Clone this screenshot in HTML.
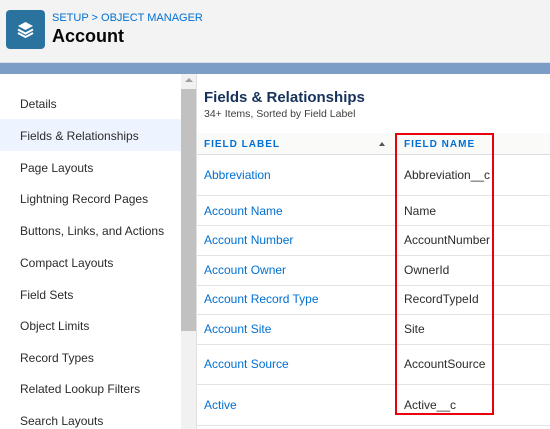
<!DOCTYPE html>
<html><head><style>
*{margin:0;padding:0;box-sizing:border-box}
body{width:550px;height:429px;overflow:hidden;font-family:"Liberation Sans",sans-serif;background:#fff;position:relative}
.hdr{position:absolute;left:0;top:0;width:550px;height:63px;background:#f3f3f3;border-bottom:1px solid #d8dde6}
.icon{position:absolute;left:6px;top:10px;width:39px;height:39px;background:#2a739e;border-radius:4px}
.crumb{position:absolute;left:52px;top:12px;font-size:11px;color:#0070d2}
.title{position:absolute;left:52px;top:26px;font-size:18px;color:#080707;font-weight:bold}
.band{position:absolute;left:0;top:63px;width:550px;height:11px;background:#7b9dc6}
.side{position:absolute;left:0;top:74px;width:181px;height:355px;background:#fff}
.side div{position:absolute;left:20px;font-size:12px;color:#2b2b2b}
.sel{position:absolute;left:0;top:119px;width:181px;height:32px;background:#eef4ff}
.sb{position:absolute;left:181px;top:74px;width:15px;height:355px;background:#f1f1f1}
.thumb{position:absolute;left:181px;top:89px;width:15px;height:242px;background:#c1c1c1}
.main{position:absolute;left:196px;top:74px;width:354px;height:355px;border-left:1px solid #e0e0e0}
.h1{position:absolute;left:204px;top:89px;font-size:15px;font-weight:bold;color:#16325c}
.sub{position:absolute;left:204px;top:108px;font-size:10.5px;color:#3e3e3c}
.th{position:absolute;left:197px;top:133px;width:353px;height:22px;background:#fafaf9;border-bottom:1px solid #d8dde6}
.th span{position:absolute;top:6px;font-size:10px;font-weight:bold;letter-spacing:1px;color:#0070d2}
.ln{position:absolute;left:197px;width:353px;height:1px;background:#e3e3e3}
.lab{position:absolute;left:204px;font-size:12px;color:#0070d2}
.nm{position:absolute;left:404px;font-size:12px;color:#2b2b2b}
.red{position:absolute;left:395px;top:133px;width:99px;height:282px;border:2px solid #e8000b}
</style></head><body>
<div class="hdr"></div>
<div class="icon"><svg width="39" height="39" viewBox="0 0 39 39"><path d="M19.5 12 L27 16 L19.5 20 L12 16Z" fill="#fff"/><path d="M12 19.5 L19.5 23.5 L27 19.5" stroke="#fff" stroke-width="2" fill="none"/><path d="M12 23 L19.5 27 L27 23" stroke="#fff" stroke-width="2" fill="none"/></svg></div>
<div class="crumb">SETUP &gt; OBJECT MANAGER</div>
<div class="title">Account</div>
<div class="band"></div>
<div class="side"></div>
<div class="sel"></div>
<div style="position:absolute;left:0;top:0">
<div class="side" style="background:none">
<div style="top:23px">Details</div>
<div style="top:55px">Fields &amp; Relationships</div>
<div style="top:87px">Page Layouts</div>
<div style="top:118px">Lightning Record Pages</div>
<div style="top:150px">Buttons, Links, and Actions</div>
<div style="top:182px">Compact Layouts</div>
<div style="top:214px">Field Sets</div>
<div style="top:245px">Object Limits</div>
<div style="top:277px">Record Types</div>
<div style="top:308px">Related Lookup Filters</div>
<div style="top:340px">Search Layouts</div>
</div></div>
<div class="sb"></div><div class="thumb"></div>
<div style="position:absolute;left:185px;top:78px;width:0;height:0;border-left:4px solid transparent;border-right:4px solid transparent;border-bottom:4px solid #a0a0a0"></div>
<div class="main"></div>
<div class="h1">Fields &amp; Relationships</div>
<div class="sub">34+ Items, Sorted by Field Label</div>
<div class="th"><span style="left:7px">FIELD LABEL</span><span style="left:207px">FIELD NAME</span>
<div style="position:absolute;left:182px;top:9px;border-left:3px solid transparent;border-right:3px solid transparent;border-bottom:4px solid #555"></div></div>
<div class="ln" style="top:195px"></div><div class="ln" style="top:225px"></div><div class="ln" style="top:255px"></div><div class="ln" style="top:285px"></div><div class="ln" style="top:314px"></div><div class="ln" style="top:344px"></div><div class="ln" style="top:384px"></div><div class="ln" style="top:425px"></div>
<div class="lab" style="top:168px">Abbreviation</div><div class="nm" style="top:168px">Abbreviation__c</div>
<div class="lab" style="top:204px">Account Name</div><div class="nm" style="top:204px">Name</div>
<div class="lab" style="top:233px">Account Number</div><div class="nm" style="top:233px">AccountNumber</div>
<div class="lab" style="top:263px">Account Owner</div><div class="nm" style="top:263px">OwnerId</div>
<div class="lab" style="top:292px">Account Record Type</div><div class="nm" style="top:292px">RecordTypeId</div>
<div class="lab" style="top:322px">Account Site</div><div class="nm" style="top:322px">Site</div>
<div class="lab" style="top:357px">Account Source</div><div class="nm" style="top:357px">AccountSource</div>
<div class="lab" style="top:398px">Active</div><div class="nm" style="top:398px">Active__c</div>
<div class="red"></div>
</body></html>
